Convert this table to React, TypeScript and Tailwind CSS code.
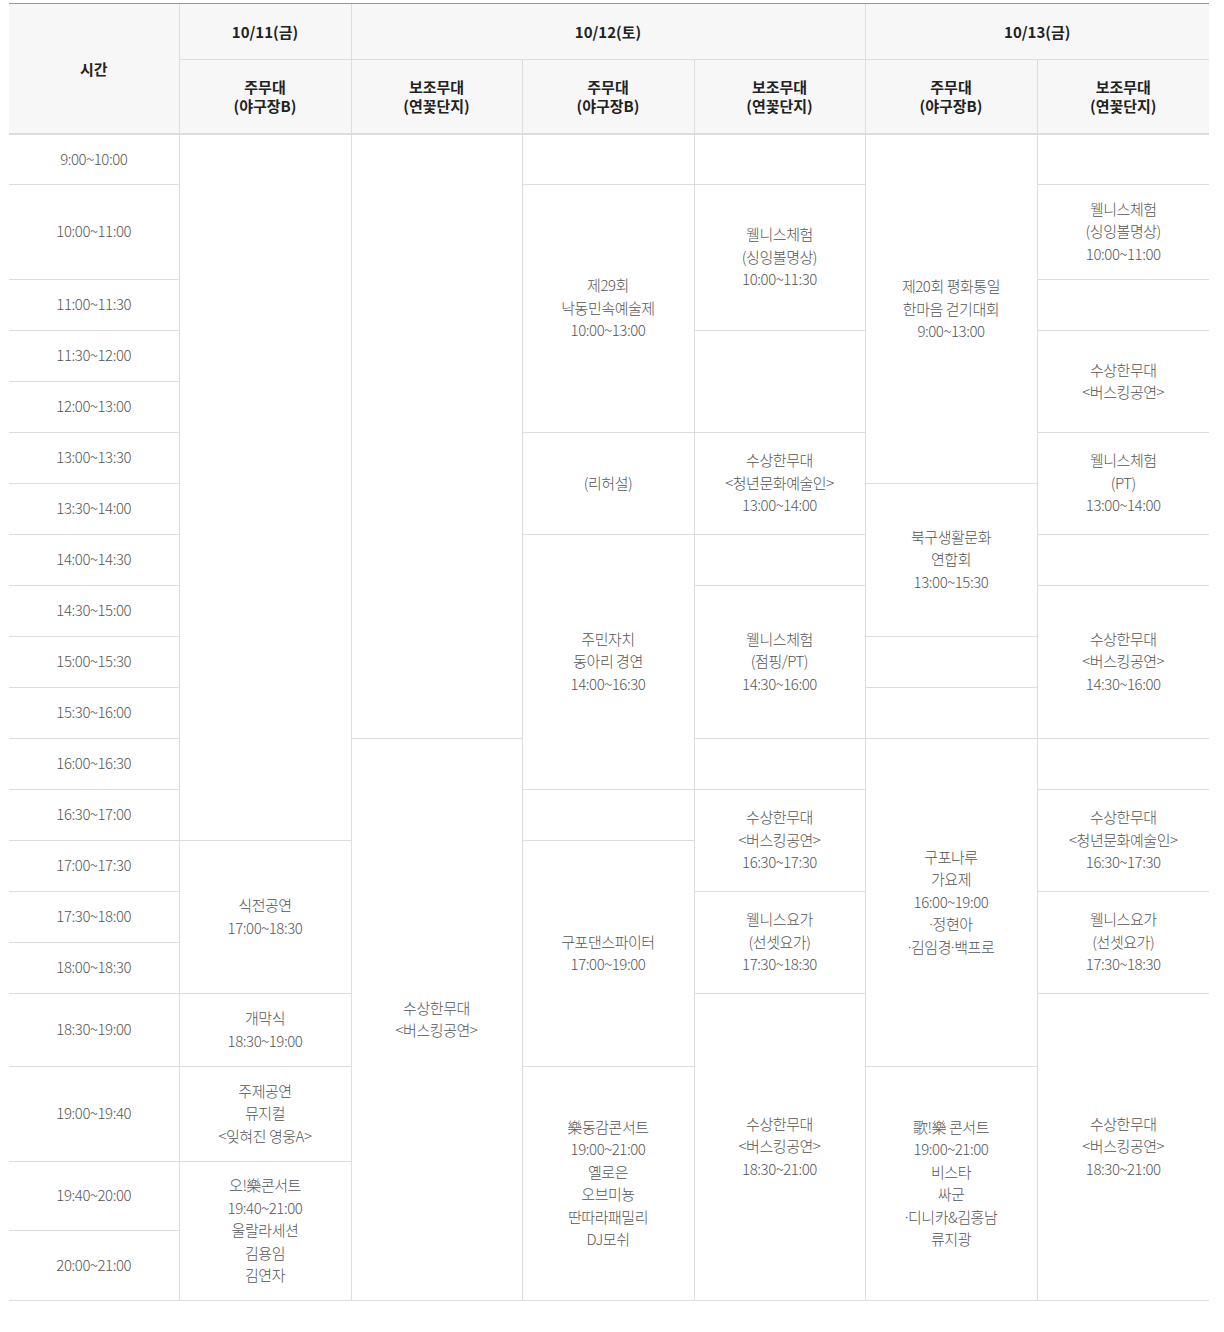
import React from 'react'

type Cell = { rows: number; lines?: string[] }

const times = [
  '9:00~10:00', '10:00~11:00', '11:00~11:30', '11:30~12:00', '12:00~13:00',
  '13:00~13:30', '13:30~14:00', '14:00~14:30', '14:30~15:00', '15:00~15:30',
  '15:30~16:00', '16:00~16:30', '16:30~17:00', '17:00~17:30', '17:30~18:00',
  '18:00~18:30', '18:30~19:00', '19:00~19:40', '19:40~20:00', '20:00~21:00',
]

const heights = [50, 95, 51, 51, 51, 51, 51, 51, 51, 51, 51, 51, 51, 51, 51, 51, 73, 95, 69, 70]

// each column: list of cells with rowspans, top to bottom
const columns: Cell[][] = [
  [
    { rows: 13 },
    { rows: 3, lines: ['식전공연', '17:00~18:30'] },
    { rows: 1, lines: ['개막식', '18:30~19:00'] },
    { rows: 1, lines: ['주제공연', '뮤지컬', '<잊혀진 영웅A>'] },
    { rows: 2, lines: ['오!樂콘서트', '19:40~21:00', '울랄라세션', '김용임', '김연자'] },
  ],
  [
    { rows: 11 },
    { rows: 9, lines: ['수상한무대', '<버스킹공연>'] },
  ],
  [
    { rows: 1 },
    { rows: 4, lines: ['제29회', '낙동민속예술제', '10:00~13:00'] },
    { rows: 2, lines: ['(리허설)'] },
    { rows: 5, lines: ['주민자치', '동아리 경연', '14:00~16:30'] },
    { rows: 1 },
    { rows: 4, lines: ['구포댄스파이터', '17:00~19:00'] },
    { rows: 3, lines: ['樂동감콘서트', '19:00~21:00', '옐로은', '오브미뇽', '딴따라패밀리', 'DJ모쉬'] },
  ],
  [
    { rows: 1 },
    { rows: 2, lines: ['웰니스체험', '(싱잉볼명상)', '10:00~11:30'] },
    { rows: 2 },
    { rows: 2, lines: ['수상한무대', '<청년문화예술인>', '13:00~14:00'] },
    { rows: 1 },
    { rows: 3, lines: ['웰니스체험', '(점핑/PT)', '14:30~16:00'] },
    { rows: 1 },
    { rows: 2, lines: ['수상한무대', '<버스킹공연>', '16:30~17:30'] },
    { rows: 2, lines: ['웰니스요가', '(선셋요가)', '17:30~18:30'] },
    { rows: 4, lines: ['수상한무대', '<버스킹공연>', '18:30~21:00'] },
  ],
  [
    { rows: 6, lines: ['제20회 평화통일', '한마음 걷기대회', '9:00~13:00'] },
    { rows: 3, lines: ['북구생활문화', '연합회', '13:00~15:30'] },
    { rows: 1 },
    { rows: 1 },
    { rows: 6, lines: ['구포나루', '가요제', '16:00~19:00', '·정현아', '·김임경·백프로'] },
    { rows: 3, lines: ['歌!樂 콘서트', '19:00~21:00', '비스타', '싸군', '·디니카&김홍남', '류지광'] },
  ],
  [
    { rows: 1 },
    { rows: 1, lines: ['웰니스체험', '(싱잉볼명상)', '10:00~11:00'] },
    { rows: 1 },
    { rows: 2, lines: ['수상한무대', '<버스킹공연>'] },
    { rows: 2, lines: ['웰니스체험', '(PT)', '13:00~14:00'] },
    { rows: 1 },
    { rows: 3, lines: ['수상한무대', '<버스킹공연>', '14:30~16:00'] },
    { rows: 1 },
    { rows: 2, lines: ['수상한무대', '<청년문화예술인>', '16:30~17:30'] },
    { rows: 2, lines: ['웰니스요가', '(선셋요가)', '17:30~18:30'] },
    { rows: 4, lines: ['수상한무대', '<버스킹공연>', '18:30~21:00'] },
  ],
]

// figure out which cell starts on which row
const starts: (Cell | null)[][] = times.map(() => columns.map(() => null))
columns.forEach((col, ci) => {
  let r = 0
  col.forEach((cell) => {
    starts[r][ci] = cell
    r += cell.rows
  })
})

// the CJK font draws the middle dot full width, so give it a latin font
function Line({ text }: { text: string }) {
  const parts = text.split('·')
  return (
    <div>
      {parts.map((p, i) => (
        <React.Fragment key={i}>
          {i > 0 && <span style={{ fontFamily: '"Noto Sans", sans-serif' }}>·</span>}
          {p}
        </React.Fragment>
      ))}
    </div>
  )
}

const th = 'border border-[#dddddd] bg-[#f7f7f7] font-bold text-[15px] leading-[19px] text-[#222] align-middle'
const td = 'border border-[#dddddd] text-center align-middle text-[15px] leading-[22.5px] text-[#555] font-light tracking-[-0.03em]'

export default function App() {
  return (
    <div
      className="w-[1224px] bg-white pl-[9px] pr-[15px] pt-[3px]"
      style={{ fontFamily: '"Noto Sans CJK KR", "Noto Sans", sans-serif' }}
    >
      <div className="border-t border-[#e07676]">
        <table className="w-[1200px] border-collapse table-fixed border-x-0 [&_tr>*:first-child]:border-l-0 [&_tr>*:last-child]:border-r-0">
          <colgroup>
            <col className="w-[170px]" />
            <col className="w-[172px]" />
            <col className="w-[171px]" />
            <col className="w-[172px]" />
            <col className="w-[171px]" />
            <col className="w-[172px]" />
            <col className="w-[172px]" />
          </colgroup>
          <thead>
            <tr className="h-[55px]">
              <th rowSpan={2} className={`${th} border-t-0 border-b-2 !border-l-0`}>시간</th>
              <th className={`${th} border-t-0`}>10/11(금)</th>
              <th colSpan={3} className={`${th} border-t-0`}>10/12(토)</th>
              <th colSpan={2} className={`${th} border-t-0 !border-r-0`}>10/13(금)</th>
            </tr>
            <tr className="h-[75px]">
              {['주무대|(야구장B)', '보조무대|(연꽃단지)', '주무대|(야구장B)', '보조무대|(연꽃단지)', '주무대|(야구장B)', '보조무대|(연꽃단지)'].map((h, i) => (
                <th key={i} className={`${th} border-b-2 ${i === 0 ? '!border-l' : ''}`}>
                  {h.split('|')[0]}
                  <br />
                  {h.split('|')[1]}
                </th>
              ))}
            </tr>
          </thead>
          <tbody>
            {times.map((t, r) => (
              <tr key={t} style={{ height: heights[r] }}>
                <td className={td}>{t}</td>
                {starts[r].map((cell, ci) =>
                  cell ? (
                    <td key={ci} rowSpan={cell.rows} className={`${td} ${ci === 0 ? '!border-l' : ''}`}>
                      {cell.lines?.map((l, i) => (
                        <Line key={i} text={l} />
                      ))}
                    </td>
                  ) : null
                )}
              </tr>
            ))}
          </tbody>
        </table>
      </div>
    </div>
  )
}
